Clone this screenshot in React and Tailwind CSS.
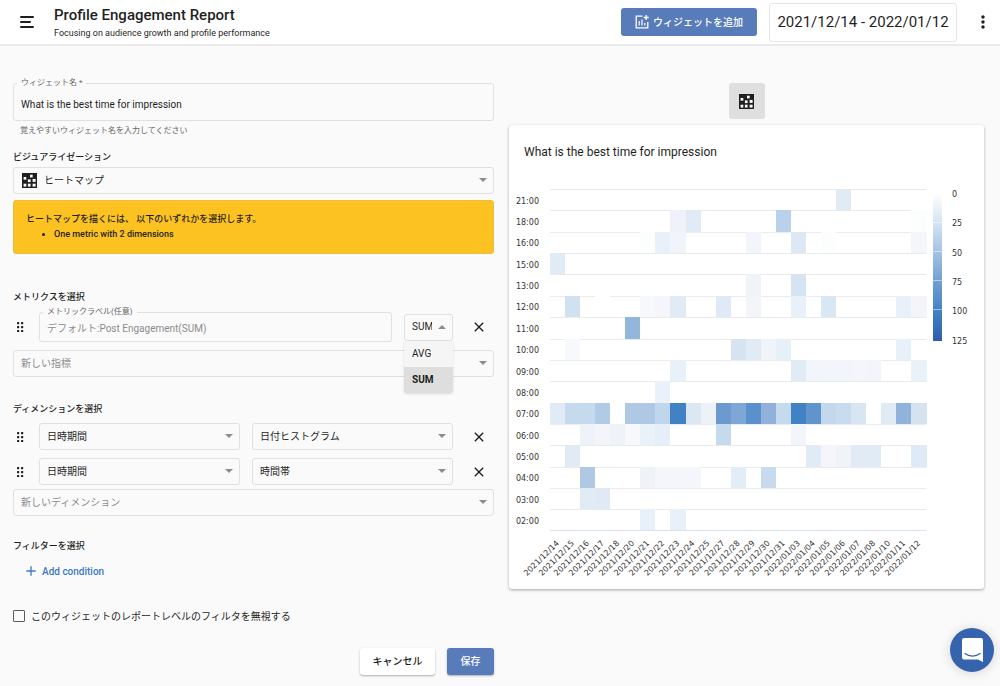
import React, { useState } from "react";
import { MdAdd, MdClose, MdMoreVert } from "react-icons/md";

const HOURS = [
  "21:00", "18:00", "16:00", "15:00", "13:00", "12:00", "11:00", "10:00",
  "09:00", "08:00", "07:00", "06:00", "05:00", "04:00", "03:00", "02:00",
];

const DATES = [
  "2021/12/14", "2021/12/15", "2021/12/16", "2021/12/17", "2021/12/18",
  "2021/12/20", "2021/12/21", "2021/12/22", "2021/12/23", "2021/12/24",
  "2021/12/25", "2021/12/27", "2021/12/28", "2021/12/29", "2021/12/30",
  "2021/12/31", "2022/01/03", "2022/01/04", "2022/01/05", "2022/01/06",
  "2022/01/07", "2022/01/08", "2022/01/10", "2022/01/11", "2022/01/12",
];

// hour -> { date index: colour }
const CELLS = {
  "21:00": { 19: "#e1ebf5" },
  "18:00": { 8: "#eff3f9", 9: "#e0ebf6", 15: "#b9d1ea", 24: "#fcfefe" },
  "16:00": { 6: "#fcfefe", 7: "#e8f0f9", 8: "#f1f4fa", 13: "#f2f5fb", 16: "#dce9f5", 18: "#fbfefd", 24: "#f5f6fb" },
  "15:00": { 0: "#e0ebf6" },
  "13:00": { 13: "#f0f4fa", 16: "#d5e4f2" },
  "12:00": { 1: "#d0e1f2", 3: "#ffffff", 6: "#f6f8fc", 7: "#f4f6fb", 8: "#e0ebf6", 11: "#dfeaf6", 13: "#f3f5fa", 16: "#e8f0f9", 18: "#d9e6f3", 23: "#e8f0f9", 24: "#f3f5fb" },
  "11:00": { 5: "#93b6dd" },
  "10:00": { 1: "#f7f9fc", 12: "#d6e4f2", 13: "#e0ebf6", 14: "#f0f4f9", 15: "#e6f0f9", 23: "#e8f0f9" },
  "09:00": { 8: "#e8f0f9", 16: "#e0ebf6", 17: "#f2f5fb", 18: "#f2f5fa", 19: "#f2f5fb", 20: "#f4f6fb", 21: "#f3f5fb", 24: "#eaf2f9" },
  "08:00": { 7: "#eaf1fa" },
  "07:00": {
    0: "#e0ebf6", 1: "#c6daee", 2: "#c6daee", 3: "#b0cbe6", 4: "#ffffff", 5: "#afc9e5", 6: "#afc9e5",
    7: "#c0d6ec", 8: "#4082c4", 9: "#dbe8f4", 10: "#edf2f9", 11: "#6c9ace", 12: "#7ea7d6", 13: "#5a90cc",
    14: "#91b1da", 15: "#c6daee", 16: "#4082c4", 17: "#6094cc", 18: "#c3d8ed", 19: "#c8dbef", 20: "#d8e6f3",
    21: "#ffffff", 22: "#e0ebf6", 23: "#8fb3db", 24: "#d5e3f1",
  },
  "06:00": { 2: "#eef3fa", 3: "#f3f5fb", 4: "#eff3f8", 5: "#f6f8fc", 6: "#eaf2f9", 7: "#e6eff9", 11: "#c6daee", 16: "#f2f5fa" },
  "05:00": { 1: "#e0ebf6", 17: "#e0ebf6", 18: "#f5f5fa", 19: "#f0f4f8", 20: "#e0ebf6", 21: "#e0ebf6", 24: "#dfeaf6" },
  "04:00": { 2: "#afc9e5", 6: "#eff3f8", 7: "#f4f6fb", 8: "#f4f6fb", 9: "#f3f6fb", 12: "#e3edf7", 14: "#c8dbee" },
  "03:00": { 2: "#e0ebf6", 3: "#dfeaf5" },
  "02:00": { 6: "#e8f0f9", 8: "#e8f0f9" },
};

const LEGEND = [0, 25, 50, 75, 100, 125];

function HeatmapIcon({ className }) {
  return (
    <svg viewBox="0 0 15 15" className={className} aria-hidden="true">
      <rect width="15" height="15" fill="#1f1f1f" />
      <g fill="#fafafa">
        <rect x="8" y="1.7" width="2.7" height="2.7" />
        <rect x="1.6" y="4" width="2.7" height="2.7" />
        <rect x="5.9" y="6.4" width="2.7" height="2.7" />
        <rect x="10.6" y="5.9" width="3" height="3" />
        <rect x="1.6" y="10.7" width="2.7" height="2.9" />
        <rect x="5.9" y="10.7" width="2.7" height="2.9" />
        <rect x="10.6" y="10.7" width="3" height="2.9" />
      </g>
    </svg>
  );
}

function AddChartIcon() {
  return (
    <svg viewBox="0 0 14 14" className="h-3.5 w-3.5" fill="none" stroke="currentColor" aria-hidden="true">
      <path d="M7.5 1.2H1.2v11.6h11.6V7" strokeWidth="1.3" />
      <path d="M4.2 6v4.5M7 4.5v6M9.8 8v2.5" strokeWidth="1.2" />
      <path d="M11.2 0v5M8.7 2.5h5" strokeWidth="1.3" />
    </svg>
  );
}

function SelectBox({ label, value, placeholder, icon, open }) {
  return (
    <div className="relative min-w-0 flex-1">
      {icon && (
        <HeatmapIcon className="pointer-events-none absolute left-[9px] top-1.5 h-[15px] w-[15px]" />
      )}
      <select
        aria-label={label}
        defaultValue={value}
        className={`block h-[27px] w-full appearance-none rounded-[3px] border border-[#e0e0e0] bg-[#fafafa] pr-5 text-[10px] leading-4 ${
          icon ? "pl-[30px]" : "pl-[7px]"
        } ${placeholder ? "text-[#8c8c8c]" : "text-[#1f1f1f]"}`}
      >
        <option>{value}</option>
      </select>
      <svg
        viewBox="0 0 8 4"
        className={`pointer-events-none absolute right-[7px] top-[11px] h-1 w-2 ${open ? "rotate-180" : ""}`}
        aria-hidden="true"
      >
        <path d="M0 0h8L4 4z" fill="#8c8c8c" />
      </svg>
    </div>
  );
}

function SectionLabel({ children, className }) {
  return (
    <h2 className={`text-[9px] font-medium leading-4 text-[#1f1f1f] ${className}`}>
      {children}
    </h2>
  );
}

function DragHandle() {
  return (
    <button type="button" aria-label="移動" className="flex w-3.5 shrink-0 justify-center">
      <svg viewBox="0 0 7 10" className="h-2.5 w-[7px]" fill="#1f1f1f" aria-hidden="true">
        {[0, 4, 8].map((y) => (
          <g key={y}>
            <rect x="0" y={y} width="2.2" height="2.2" rx="0.4" />
            <rect x="4" y={y} width="2.2" height="2.2" rx="0.4" />
          </g>
        ))}
      </svg>
    </button>
  );
}

function RemoveButton() {
  return (
    <button type="button" aria-label="削除" className="flex w-7 shrink-0 justify-center text-[#1f1f1f]">
      <MdClose className="h-4 w-4" />
    </button>
  );
}

function DimensionRow({ field, type, className }) {
  return (
    <div className={`flex items-center gap-3 pr-px ${className}`}>
      <DragHandle />
      <SelectBox label="ディメンション" value={field} />
      <SelectBox label="種類" value={type} />
      <RemoveButton />
    </div>
  );
}

function AggregateSelect() {
  const [picked, setPicked] = useState("SUM");

  return (
    <div className="relative flex w-[49px] shrink-0">
      <SelectBox label="集計" value="SUM" open />
      <ul
        role="listbox"
        className="absolute left-0 top-full z-10 w-full overflow-hidden rounded-b-[3px] bg-[#f5f5f5] shadow-sm"
      >
        {["AVG", "SUM"].map((name) => (
          <li key={name} role="option" aria-selected={picked === name}>
            <button
              type="button"
              onClick={() => setPicked(name)}
              className={`block h-[26px] w-full pl-2 text-left text-[10px] text-[#1f1f1f] ${
                picked === name ? "bg-[#dedede] font-bold" : ""
              }`}
            >
              {name}
            </button>
          </li>
        ))}
      </ul>
    </div>
  );
}

function Heatmap() {
  const left = 41;
  const top = 11;
  const colW = 15.06;
  const rowH = 21.36;
  const right = left + colW * DATES.length;
  const bottom = top + rowH * HOURS.length;

  return (
    <svg
      viewBox="0 0 475 411"
      className="block w-full font-['DejaVu_Sans',sans-serif] text-[8px]"
      role="img"
      aria-label="What is the best time for impression"
    >
      <defs>
        <linearGradient id="scale" x1="0" y1="0" x2="0" y2="1">
          <stop offset="0" stopColor="#ffffff" />
          <stop offset="0.2" stopColor="#d5e4f2" />
          <stop offset="0.4" stopColor="#a3c2e4" />
          <stop offset="0.6" stopColor="#719fd2" />
          <stop offset="0.8" stopColor="#4082c4" />
          <stop offset="1" stopColor="#2f5dab" />
        </linearGradient>
      </defs>

      {HOURS.map((hour, r) => (
        <path key={hour} d={`M${left} ${Math.round(top + r * rowH) + 0.5}H${right}`} stroke="#e9ecef" />
      ))}
      {HOURS.map((hour, r) =>
        Object.entries(CELLS[hour]).map(([c, fill]) => (
          <rect
            key={`${hour}-${c}`}
            x={Math.round(left + c * colW)}
            y={Math.round(top + r * rowH)}
            width={Math.round(left + (Number(c) + 1) * colW) - Math.round(left + c * colW)}
            height={Math.round(top + (r + 1) * rowH) - Math.round(top + r * rowH)}
            fill={fill}
          />
        ))
      )}
      <path d={`M${left} ${Math.round(bottom) - 0.5}H${right}`} stroke="#d8e4f2" />

      <g fill="#333333" textAnchor="end">
        {HOURS.map((hour, r) => (
          <text key={hour} x="30" y={top + (r + 0.5) * rowH + 4}>
            {hour}
          </text>
        ))}
        {DATES.map((date, c) => {
          const x = left + (c + 0.5) * colW + 2;
          const y = bottom + 13;
          return (
            <text key={date} x={x} y={y} transform={`rotate(-45 ${x} ${y})`}>
              {date}
            </text>
          );
        })}
      </g>

      <rect x="424" y="15" width="9" height="148" fill="url(#scale)" />
      {LEGEND.map((n, i) => (
        <g key={n}>
          {i > 0 && i < 5 && (
            <path d={`M424 ${15.5 + i * 29}h9`} stroke="#ffffff" strokeOpacity="0.5" />
          )}
          <text x="443" y={19 + i * 29.3} fill="#333333">
            {n}
          </text>
        </g>
      ))}
    </svg>
  );
}

function Header() {
  return (
    <header className="flex h-[46px] items-center border-b-2 border-[#ebebeb] bg-white pl-5 pr-[7px]">
      <button type="button" aria-label="メニュー" className="shrink-0">
        <svg viewBox="0 0 14 12" className="h-3 w-3.5" stroke="#1f1f1f" strokeWidth="2" strokeLinecap="round" aria-hidden="true">
          <path d="M1 1h12M1 6h9M1 11h12" />
        </svg>
      </button>
      <div className="ml-5 min-w-0 flex-1 pt-0.5">
        <h1 className="truncate text-[15px] font-medium leading-5 text-[#1f1f1f]">
          Profile Engagement Report
        </h1>
        <p className="truncate text-[9px] leading-4 text-[#1f1f1f]">
          Focusing on audience growth and profile performance
        </p>
      </div>
      <button
        type="button"
        className="flex h-7 w-[136px] shrink-0 items-center justify-center gap-1 rounded-[3px] bg-[#587bb9] text-[10px] font-medium text-white"
      >
        <AddChartIcon />
        ウィジェットを追加
      </button>
      <input
        type="text"
        aria-label="期間"
        defaultValue="2021/12/14 - 2022/01/12"
        className="ml-3 h-[39px] w-[188px] shrink-0 rounded-[3px] border border-[#e3e6e6] bg-white text-center text-[15px] text-[#1f1f1f]"
      />
      <button type="button" aria-label="その他" className="ml-4 shrink-0 text-[#1f1f1f]">
        <MdMoreVert className="h-5 w-5" />
      </button>
    </header>
  );
}

function WidgetForm() {
  return (
    <form className="min-w-0" onSubmit={(e) => e.preventDefault()}>
      <div className="relative">
        <label
          htmlFor="widget-name"
          className="absolute -top-2 left-1 bg-[#fafafa] px-1 text-[8px] leading-4 text-[#666666]"
        >
          ウィジェット名 *
        </label>
        <input
          id="widget-name"
          type="text"
          defaultValue="What is the best time for impression"
          className="block h-[38px] w-full rounded-[3px] border border-[#e0e0e0] bg-transparent px-[7px] pt-1 text-[10px] text-[#1f1f1f]"
        />
      </div>
      <p className="mt-0.5 pl-[7px] text-[8px] leading-4 text-[#666666]">
        覚えやすいウィジェット名を入力してください
      </p>

      <SectionLabel className="mt-2.5">ビジュアライゼーション</SectionLabel>
      <div className="mt-0.5 flex">
        <SelectBox label="ビジュアライゼーション" value="ヒートマップ" icon />
      </div>

      <div className="mt-1.5 rounded-[3px] border border-[#ecbd3b] bg-[#fcc222] px-3 py-[11px] text-[9px] font-medium leading-[15px] text-[#1f1f1f]">
        <p>ヒートマップを描くには、 以下のいずれかを選択します。</p>
        <ul className="list-disc pl-7">
          <li>One metric with 2 dimensions</li>
        </ul>
      </div>

      <SectionLabel className="mt-[35px]">メトリクスを選択</SectionLabel>
      <div className="mt-[7px] flex items-center gap-3 pr-px">
        <DragHandle />
        <div className="relative min-w-0 flex-1">
          <label
            htmlFor="metric-label"
            className="absolute -top-2 left-1 bg-[#fafafa] px-1 text-[8px] leading-4 text-[#666666]"
          >
            メトリックラベル(任意)
          </label>
          <input
            id="metric-label"
            type="text"
            placeholder="デフォルト:Post Engagement(SUM)"
            className="block h-[30px] w-full rounded-[3px] border border-[#e0e0e0] bg-transparent px-[7px] pt-0.5 text-[10px] placeholder:text-[#8c8c8c]"
          />
        </div>
        <AggregateSelect />
        <RemoveButton />
      </div>
      <div className="mt-2 flex">
        <SelectBox label="新しい指標" value="新しい指標" placeholder />
      </div>

      <SectionLabel className="mt-6">ディメンションを選択</SectionLabel>
      <DimensionRow field="日時期間" type="日付ヒストグラム" className="mt-1.5" />
      <DimensionRow field="日時期間" type="時間帯" className="mt-2" />
      <div className="mt-1 flex">
        <SelectBox label="新しいディメンション" value="新しいディメンション" placeholder />
      </div>

      <SectionLabel className="mt-[22px]">フィルターを選択</SectionLabel>
      <button
        type="button"
        className="ml-2.5 mt-2 flex h-[18px] items-center gap-[3px] text-[10px] font-medium text-[#3d79c2]"
      >
        <MdAdd className="h-4 w-4" />
        Add condition
      </button>

      <label className="mt-[27px] flex h-[18px] items-center gap-1.5 text-[10px] text-[#1f1f1f]">
        <input
          type="checkbox"
          className="h-3 w-3 appearance-none rounded-[1px] border border-[#5c5c5c] checked:bg-[#587bb9]"
        />
        このウィジェットのレポートレベルのフィルタを無視する
      </label>

      <div className="mt-[23px] flex justify-end gap-3 pb-2 text-[10px] font-medium">
        <button type="button" className="h-[27px] w-[75px] rounded-[3px] bg-white text-[#1f1f1f] shadow-[0_1px_2px_rgba(0,0,0,0.3)]">
          キャンセル
        </button>
        <button type="submit" className="h-[27px] w-[47px] rounded-[3px] bg-[#587bb9] text-white shadow-[0_1px_2px_rgba(0,0,0,0.3)]">
          保存
        </button>
      </div>
    </form>
  );
}

function WidgetPreview() {
  return (
    <section className="min-w-0">
      <button
        type="button"
        aria-label="ヒートマップ"
        className="mx-auto flex h-9 w-9 items-center justify-center rounded-[3px] bg-[#dfdfdf]"
      >
        <HeatmapIcon className="h-[15px] w-[15px]" />
      </button>
      <div className="mt-1.5 rounded-[3px] bg-white shadow-[0_1px_3px_rgba(0,0,0,0.35)]">
        <h2 className="px-[15px] pb-4 pt-[17px] text-[12px] leading-5 text-[#1f1f1f]">
          What is the best time for impression
        </h2>
        <Heatmap />
      </div>
    </section>
  );
}

function App() {
  return (
    <div className="min-h-screen bg-[#fafafa] font-['Roboto','Noto_Sans_CJK_JP',sans-serif]" lang="ja">
      <Header />
      <main className="grid grid-cols-[481fr_475fr] gap-[15px] pl-[13px] pr-4 pt-[37px]">
        <WidgetForm />
        <WidgetPreview />
      </main>
      <button
        type="button"
        aria-label="チャット"
        className="fixed bottom-3.5 right-1.5 flex h-11 w-11 items-center justify-center rounded-full bg-[#3563ae] shadow-[0_1px_12px_rgba(0,0,0,0.15)]"
      >
        <svg viewBox="0 0 21 24" className="h-6 w-[21px]" aria-hidden="true">
          <path d="M2 0h17a2 2 0 0 1 2 2v22l-5-2.5H2a2 2 0 0 1-2-2V2a2 2 0 0 1 2-2z" fill="#ffffff" />
          <path d="M3 15.5c4 3.4 11 3.4 15 0" fill="none" stroke="#3563ae" strokeWidth="1.2" strokeLinecap="round" />
        </svg>
      </button>
    </div>
  );
}

export default App;
